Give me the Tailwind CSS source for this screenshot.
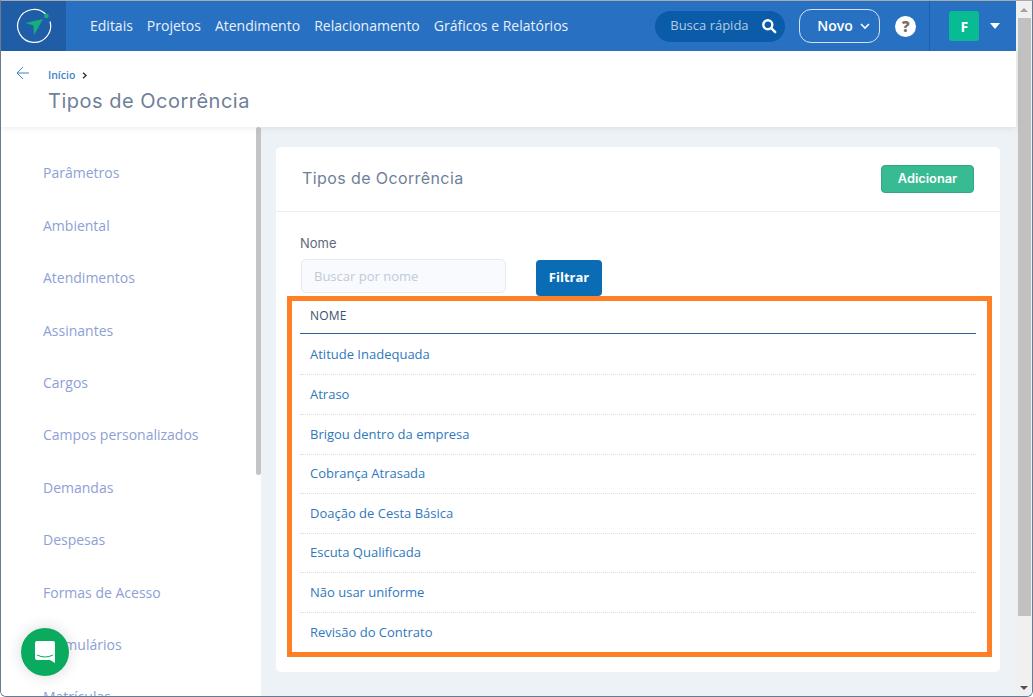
<!DOCTYPE html>
<html lang="pt-BR">
<head>
  <meta charset="UTF-8" />
  <title>Tipos de Ocorrência</title>
  <script src="https://cdn.jsdelivr.net/npm/@tailwindcss/browser@4"></script>
</head>
<body class="font-['Open_Sans',sans-serif]">
  <div class="relative w-[1033px] h-[697px] overflow-hidden bg-[#edf2f6] border-x border-b border-t border-x-[#6b7a90] border-b-[#6b7a90] border-t-[#a9a9a9] rounded-b-md flex">
    <!-- Coluna da página -->
    <div class="w-[1015px] h-full flex flex-col shrink-0">
      <!-- Navbar -->
      <header class="h-[50px] bg-[#2871c2] flex items-center shrink-0">
        <div class="w-[65px] h-full bg-[#1f5ea6] flex items-center justify-center">
          <svg width="38" height="38" viewBox="0 0 38 38" fill="none">
            <path d="M30.500 7A16.500 16.500 0 1 0 35 14.500" stroke="#fff" stroke-width="1.2" />
            <circle cx="31.500" cy="9" r="2.300" fill="#12b07a" />
            <path d="M10.500 16 28 12l-9 16-.5-9.500z" fill="#12b07a" />
          </svg>
        </div>
        <nav class="flex items-center gap-[14px] ml-[24px] -mt-[2px] text-[14px] text-[#e9f0f8]">
          <a>Editais</a>
          <a>Projetos</a>
          <a>Atendimento</a>
          <a>Relacionamento</a>
          <a>Gráficos e Relatórios</a>
        </nav>
        <div class="ml-[87px] w-[130px] h-[31px] rounded-full bg-[#0a5ca8] flex items-center justify-between pl-[15px] pr-[8px] text-[13px] text-[#b6cbe2]">
          <span>Busca rápida</span>
          <svg width="16" height="16" viewBox="0 0 16 16" fill="none" stroke="#fff" stroke-width="2.4">
            <circle cx="6.800" cy="6.800" r="4.500" />
            <path d="m10.200 10.200 4 4" stroke-linecap="round" />
          </svg>
        </div>
        <div class="ml-[14px] w-[81px] h-[34px] rounded-[12px] border border-[#d5e2f1] flex items-center justify-start pl-[17px] gap-[7px] text-[14px] font-semibold text-white">
          <span class="-mt-[2px]">Novo</span>
          <svg width="10" height="7" viewBox="0 0 10 7" fill="none" stroke="#fff" stroke-width="1.6"><path d="m1 1 4 4 4-4" /></svg>
        </div>
        <div class="ml-[15px] w-[21px] h-[21px] rounded-full bg-white flex items-center justify-center text-[15px] font-extrabold text-[#7d6f6a]">?</div>
        <div class="ml-[13px] h-full border-l border-[#1f5ea6] flex items-center pl-[19px]">
          <div class="w-[30px] h-[30px] rounded-[3px] bg-[#08bb93] flex items-center justify-center text-[14px] font-bold text-white">F</div>
          <div class="ml-[11px] w-0 h-0 border-x-[5.5px] border-x-transparent border-t-[6px] border-t-white"></div>
        </div>
      </header>

      <!-- Cabeçalho da página -->
      <div class="h-[76px] bg-white shadow-[0_1px_6px_rgba(60,80,110,0.12)] relative z-10 shrink-0 flex">
        <div class="w-[47px] pl-[15px] pt-[15px]">
          <svg width="14" height="14" viewBox="0 0 14 14" fill="none" stroke="#3f83c9" stroke-width="1"><path d="M13 7H1M7 1 1 7l6 6" /></svg>
        </div>
        <div>
          <div class="flex items-center gap-[7px] mt-[17px] text-[10.5px] font-semibold leading-[14px] text-[#3f83c9]">
            <span>Início</span>
            <svg width="6" height="7" viewBox="0 0 6 7" fill="none" stroke="#333" stroke-width="1.4"><path d="m1 .8 3 2.700-3 2.700" /></svg>
          </div>
          <h1 class="mt-[6px] font-['Inter',sans-serif] text-[20px] leading-[26px] tracking-[0.5px] text-[#6f7f99]">Tipos de Ocorrência</h1>
        </div>
      </div>

      <div class="flex-1 flex min-h-0">
        <!-- Menu lateral -->
        <aside class="relative w-[260px] bg-white overflow-hidden shrink-0">
          <div class="absolute right-0 top-0 w-[5px] h-[348px] rounded-full bg-[#c4c4c4]"></div>
          <ul class="pl-[42px] pt-[20.400px] text-[14px] text-[#8ea0d6]">
            <li class="h-[52.4px] leading-[52px]">Parâmetros</li>
            <li class="h-[52.4px] leading-[52px]">Ambiental</li>
            <li class="h-[52.4px] leading-[52px]">Atendimentos</li>
            <li class="h-[52.4px] leading-[52px]">Assinantes</li>
            <li class="h-[52.4px] leading-[52px]">Cargos</li>
            <li class="h-[52.4px] leading-[52px]">Campos personalizados</li>
            <li class="h-[52.4px] leading-[52px]">Demandas</li>
            <li class="h-[52.4px] leading-[52px]">Despesas</li>
            <li class="h-[52.4px] leading-[52px]">Formas de Acesso</li>
            <li class="h-[52.4px] leading-[52px]">Formulários</li>
            <li class="h-[52.4px] leading-[52px]">Matrículas</li>
          </ul>
        </aside>

        <!-- Conteúdo -->
        <main class="flex-1 pl-[15px] pr-[16px] pt-[20px]">
          <section class="bg-white rounded-[5px] h-[525px]">
            <div class="h-[65px] border-b border-[#e8eef5] flex items-center justify-between pl-[26px] pr-[26px]">
              <h2 class="-mt-[2px] font-['Inter',sans-serif] text-[16px] tracking-[0.4px] text-[#6f7f99]">Tipos de Ocorrência</h2>
              <button class="w-[93px] h-[28px] rounded-[4px] bg-[#38bb92] border border-[#2fa883] font-['Inter',sans-serif] text-[12.800px] font-semibold text-white">Adicionar</button>
            </div>
            <div class="px-[24px] pt-[23px]">
              <label class="block font-['Inter',sans-serif] text-[13px] leading-[16px] text-[#5f6b7c]">Nome</label>
              <div class="flex items-start gap-[30px] mt-[8px] ml-px">
                <div class="w-[205px] h-[34px] rounded-[5px] border border-[#e3eaf3] bg-[#f8fafd] pl-[12px] text-[13px] leading-[33px] text-[#c0cbda]">Buscar por nome</div>
                <button class="mt-px w-[66px] h-[36px] rounded-[4px] bg-[#0a6cb5] text-[13px] font-bold text-white">Filtrar</button>
              </div>
              <div class="w-[676px] mt-[3px] text-[13px]">
                <div class="h-[35px] pl-[10px] border-b border-[#2f5f9a] flex items-center text-[12px] font-medium tracking-[0.2px] text-[#3d4f6e]">NOME</div>
                <ul class="text-[#2f78bd]">
                  <li class="h-[41px] pl-[10px] pt-[2px] border-b border-dotted border-[#d9dde2] flex items-center">Atitude Inadequada</li>
                  <li class="h-[40px] pl-[10px] border-b border-dotted border-[#d9dde2] flex items-center">Atraso</li>
                  <li class="h-[39.5px] pl-[10px] border-b border-dotted border-[#d9dde2] flex items-center">Brigou dentro da empresa</li>
                  <li class="h-[39.5px] pl-[10px] border-b border-dotted border-[#d9dde2] flex items-center">Cobrança Atrasada</li>
                  <li class="h-[39.5px] pl-[10px] border-b border-dotted border-[#d9dde2] flex items-center">Doação de Cesta Básica</li>
                  <li class="h-[39.5px] pl-[10px] border-b border-dotted border-[#d9dde2] flex items-center">Escuta Qualificada</li>
                  <li class="h-[39.5px] pl-[10px] border-b border-dotted border-[#d9dde2] flex items-center">Não usar uniforme</li>
                  <li class="h-[39.5px] pl-[10px] flex items-center">Revisão do Contrato</li>
                </ul>
              </div>
            </div>
          </section>
        </main>
      </div>
    </div>

    <!-- Barra de rolagem da janela -->
    <div class="w-[16px] h-full bg-[#f0f0f0] shrink-0 flex flex-col items-center">
      <div class="h-[17px] flex items-center justify-center">
        <div class="w-0 h-0 border-x-[4px] border-x-transparent border-b-[4px] border-b-[#a3a3a3]"></div>
      </div>
      <div class="w-[13px] h-[598px] bg-[#c1c1c1]"></div>
      <div class="mt-auto h-[17px] flex items-center justify-center">
        <div class="w-0 h-0 border-x-[4px] border-x-transparent border-t-[4px] border-t-[#505050]"></div>
      </div>
    </div>

    <!-- Destaque laranja sobre a tabela -->
    <div class="absolute left-[286px] top-[295px] w-[705px] h-[361px] border-[5px] border-[#ff7f27]"></div>

    <!-- Botão do chat -->
    <div class="absolute left-[20px] top-[627px] w-[48px] h-[48px] rounded-full bg-[#0bab5f] shadow-[0_0_16px_rgba(0,0,0,0.15)] flex items-center justify-center">
      <svg width="22" height="24" viewBox="0 0 22 24">
        <path d="M3 1h16a2 2 0 0 1 2 2v20l-5-3H3a2 2 0 0 1-2-2V3a2 2 0 0 1 2-2z" fill="#fff" />
        <path d="M3 15q8 4 16 0" fill="none" stroke="#0bab5f" stroke-width="1" />
      </svg>
    </div>
  </div>
</body>
</html>
